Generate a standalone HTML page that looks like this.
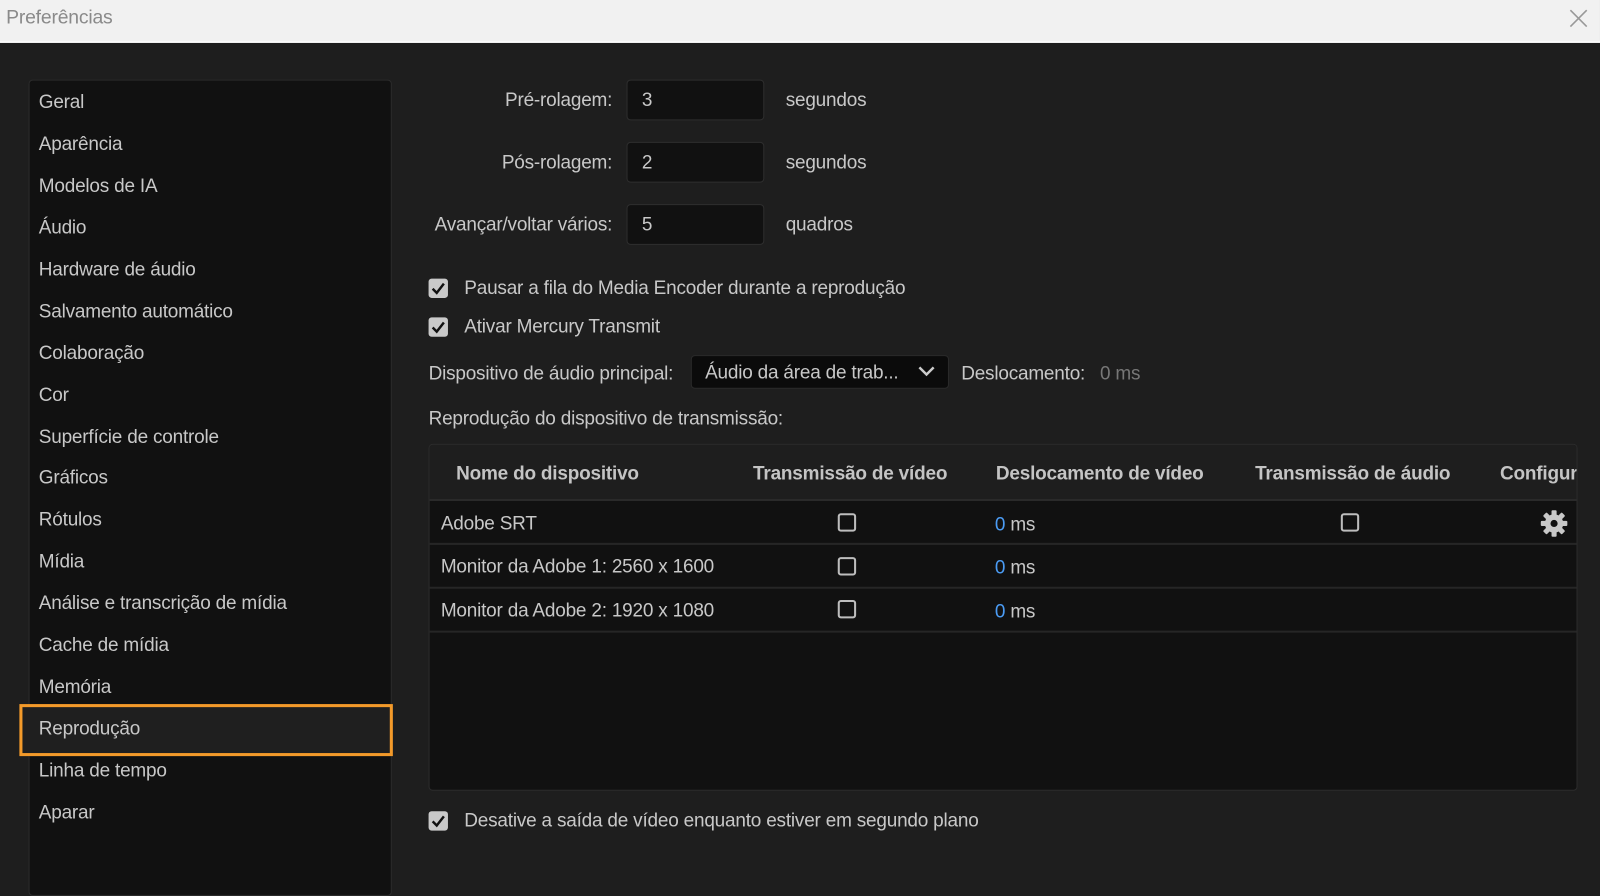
<!DOCTYPE html>
<html><head><meta charset="utf-8"><style>
*{margin:0;padding:0;box-sizing:border-box}
html,body{width:1600px;height:847px;overflow:hidden;background:#1e1e1e}
#w{position:absolute;left:0;top:0;width:1568px;height:830px;transform:scale(1.0204);transform-origin:0 0;font-family:"Liberation Sans",sans-serif;color:#c8c8c8;font-size:18.6px;letter-spacing:-0.2px}
.a{position:absolute;white-space:nowrap;line-height:22px}
.title{position:absolute;left:0;top:0;width:1568px;height:42px;background:#f1f1f1;border-bottom:2px solid #fafafa}
.side{position:absolute;left:28px;top:78px;width:356px;height:800px;background:#111;border:1px solid #2b2b2b;border-radius:4px}
.inp{position:absolute;left:614px;width:135px;height:40px;background:#111;border:1px solid #2e2e2e;border-radius:4px;padding-left:14px;line-height:38px}
.cb{position:absolute;width:19px;height:19px;background:#c9c9c9;border-radius:3px}
.cb svg{position:absolute;left:2px;top:2px}
.ecb{position:absolute;width:18px;height:18px;border:2px solid #bdbdbd;border-radius:3px}
.hd{font-weight:bold;color:#c4c4c4}
</style></head><body><div id="w">
<div class="title"></div>
<div class="a" style="left:6px;top:7px;color:#8a8a8a;font-size:19px">Preferências</div>
<svg class="a" style="left:1537px;top:8px" width="20" height="20"><path d="M2 2L18 18M18 2L2 18" stroke="#999" stroke-width="1.6"/></svg>
<div class="side"></div>
<div style="position:absolute;left:19px;top:690px;width:366px;height:51px;border:3px solid #f39a2a;background:#1f1f1f"></div>
<div class="a" style="left:38px;top:89px">Geral</div>
<div class="a" style="left:38px;top:130px">Aparência</div>
<div class="a" style="left:38px;top:171px">Modelos de IA</div>
<div class="a" style="left:38px;top:212px">Áudio</div>
<div class="a" style="left:38px;top:253px">Hardware de áudio</div>
<div class="a" style="left:38px;top:294px">Salvamento automático</div>
<div class="a" style="left:38px;top:335px">Colaboração</div>
<div class="a" style="left:38px;top:376px">Cor</div>
<div class="a" style="left:38px;top:417px">Superfície de controle</div>
<div class="a" style="left:38px;top:457px">Gráficos</div>
<div class="a" style="left:38px;top:498px">Rótulos</div>
<div class="a" style="left:38px;top:539px">Mídia</div>
<div class="a" style="left:38px;top:580px">Análise e transcrição de mídia</div>
<div class="a" style="left:38px;top:621px">Cache de mídia</div>
<div class="a" style="left:38px;top:662px">Memória</div>
<div class="a" style="left:38px;top:703px">Reprodução</div>
<div class="a" style="left:38px;top:744px">Linha de tempo</div>
<div class="a" style="left:38px;top:785px">Aparar</div>

<div class="a" style="right:968px;top:87px">Pré-rolagem:</div>
<div class="a" style="right:968px;top:148px">Pós-rolagem:</div>
<div class="a" style="right:968px;top:209px">Avançar/voltar vários:</div>
<div class="inp" style="top:78px">3</div>
<div class="inp" style="top:139px">2</div>
<div class="inp" style="top:200px">5</div>
<div class="a" style="left:770px;top:87px">segundos</div>
<div class="a" style="left:770px;top:148px">segundos</div>
<div class="a" style="left:770px;top:209px">quadros</div>

<div class="cb" style="left:420px;top:273px"><svg width="15" height="15"><path d="M2 8L6 12L13 3" stroke="#111" stroke-width="2.4" fill="none"/></svg></div>
<div class="a" style="left:455px;top:271px">Pausar a fila do Media Encoder durante a reprodução</div>
<div class="cb" style="left:420px;top:311px"><svg width="15" height="15"><path d="M2 8L6 12L13 3" stroke="#111" stroke-width="2.4" fill="none"/></svg></div>
<div class="a" style="left:455px;top:309px">Ativar Mercury Transmit</div>
<div class="a" style="left:420px;top:355px">Dispositivo de áudio principal:</div>
<div style="position:absolute;left:677px;top:348px;width:253px;height:33px;background:#0b0b0b;border:1px solid #2a2a2a;border-radius:4px"></div>
<div class="a" style="left:691px;top:354px">Áudio da área de trab...</div>
<svg class="a" style="left:899px;top:357px" width="18" height="14"><path d="M2 3L9 10L16 3" stroke="#ccc" stroke-width="2.4" fill="none"/></svg>
<div class="a" style="left:942px;top:355px">Deslocamento:</div>
<div class="a" style="left:1078px;top:355px;color:#777">0 ms</div>
<div class="a" style="left:420px;top:399px">Reprodução do dispositivo de transmissão:</div>

<div style="position:absolute;left:420px;top:435px;width:1126px;height:340px;background:#111;border:1px solid #2c2c2c;border-radius:4px;overflow:hidden">
<div style="position:absolute;left:0;top:0;width:100%;height:55px;background:#1e1e1e;border-bottom:2px solid #2a2a2a"></div>
<div style="position:absolute;left:0;top:96px;width:100%;height:2px;background:#262626"></div>
<div style="position:absolute;left:0;top:139px;width:100%;height:2px;background:#262626"></div>
<div style="position:absolute;left:0;top:182px;width:100%;height:2px;background:#262626"></div>
<div class="a hd" style="left:26px;top:17px">Nome do dispositivo</div>
<div class="a hd" style="left:317px;top:17px">Transmissão de vídeo</div>
<div class="a hd" style="left:555px;top:17px">Deslocamento de vídeo</div>
<div class="a hd" style="left:809px;top:17px">Transmissão de áudio</div>
<div class="a hd" style="left:1049px;top:17px">Configurações</div>
<div class="a" style="left:11px;top:66px">Adobe SRT</div>
<div class="a" style="left:11px;top:108px">Monitor da Adobe 1: 2560 x 1600</div>
<div class="a" style="left:11px;top:151px">Monitor da Adobe 2: 1920 x 1080</div>
<div class="ecb" style="left:400px;top:67px"></div>
<div class="ecb" style="left:400px;top:110px"></div>
<div class="ecb" style="left:400px;top:152px"></div>
<div class="ecb" style="left:893px;top:67px"></div>
<div class="a" style="left:554px;top:67px"><span style="color:#4b9cf5">0</span> ms</div>
<div class="a" style="left:554px;top:109px"><span style="color:#4b9cf5">0</span> ms</div>
<div class="a" style="left:554px;top:152px"><span style="color:#4b9cf5">0</span> ms</div>
<svg class="a" style="left:1088px;top:63px" width="28" height="28" viewBox="0 0 28 28"><g fill="#c8c8c8"><circle cx="14" cy="14" r="9"/><rect x="11.5" y="1" width="5" height="26" rx="1"/><rect x="11.5" y="1" width="5" height="26" rx="1" transform="rotate(45 14 14)"/><rect x="11.5" y="1" width="5" height="26" rx="1" transform="rotate(90 14 14)"/><rect x="11.5" y="1" width="5" height="26" rx="1" transform="rotate(135 14 14)"/></g><circle cx="14" cy="14" r="3.5" fill="#111"/></svg>
</div>

<div class="cb" style="left:420px;top:795px"><svg width="15" height="15"><path d="M2 8L6 12L13 3" stroke="#111" stroke-width="2.4" fill="none"/></svg></div>
<div class="a" style="left:455px;top:793px">Desative a saída de vídeo enquanto estiver em segundo plano</div>
</div></body></html>
